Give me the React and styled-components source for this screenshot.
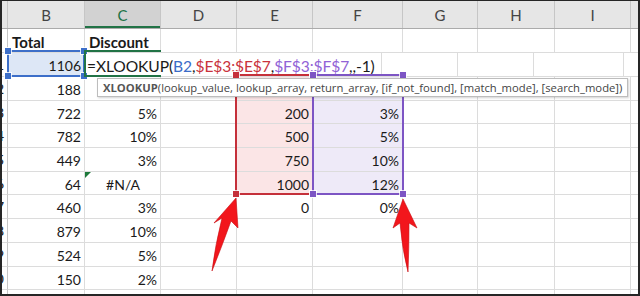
import React from "react";
import styled, { createGlobalStyle, css } from "styled-components";

const GlobalStyle = createGlobalStyle`
  body {
    margin: 0;
    background: #fff;
    font-family: "Lato", "Liberation Sans", sans-serif;
  }
`;

const COLUMNS = [
  { key: "B", width: 77 },
  { key: "C", width: 76 },
  { key: "D", width: 76 },
  { key: "E", width: 76 },
  { key: "F", width: 90 },
  { key: "G", width: 75 },
  { key: "H", width: 77 },
  { key: "I", width: 76 },
];

const FORMULA = [
  { text: "=XLOOKUP(", color: "#1a1a1a" },
  { text: "B2", color: "#3b6cc7" },
  { text: ",", color: "#1a1a1a" },
  { text: "$E$3:$E$7", color: "#c9323c" },
  { text: ",", color: "#1a1a1a" },
  { text: "$F$3:$F$7", color: "#9163d6" },
  { text: ",,-1)", color: "#1a1a1a" },
];

const ROWS = [
  { n: "", h: 24, bold: true, B: "Total", C: "Discount" },
  { n: "1", h: 24, B: "1106", formula: true },
  { n: "2", h: 24, B: "188", E: "", F: "" },
  { n: "3", h: 23, B: "722", C: "5%", E: "200", F: "3%" },
  { n: "4", h: 24, B: "782", C: "10%", E: "500", F: "5%" },
  { n: "5", h: 24, B: "449", C: "3%", E: "750", F: "10%" },
  { n: "6", h: 23, B: "64", C: "#N/A", E: "1000", F: "12%", error: true },
  { n: "7", h: 24, B: "460", C: "3%", E: "0", F: "0%" },
  { n: "8", h: 24, B: "879", C: "10%" },
  { n: "9", h: 24, B: "524", C: "5%" },
  { n: "10", h: 23, B: "150", C: "2%" },
  { n: "11", h: 24 },
];

const Frame = styled.div`
  width: 640px;
  height: 296px;
  box-sizing: border-box;
  border: 2px solid #262626;
  border-top-width: 1px;
  overflow: hidden;
  background: #fff;
`;

const Sheet = styled.div`
  position: relative;
  display: flex;
  flex-direction: column;
`;

const HeaderRow = styled.div`
  display: flex;
  height: 27px;
  background: #e6e6e6;
  border-bottom: 1px solid #ababab;
`;

const HeaderCell = styled.div`
  flex: 0 0 ${(p) => p.$w}px;
  box-sizing: border-box;
  display: flex;
  align-items: center;
  justify-content: center;
  border-right: 1px solid #c6c6c6;
  font-size: 15px;
  color: #444;

  ${(p) =>
    p.$active &&
    css`
      background: #d2d2d2;
      color: #217346;
      box-shadow: inset 0 -2px 0 #217346;
    `}
  ${(p) => p.$fill && "flex: 1 1 auto; border-right: none;"}
`;

const Row = styled.div`
  display: flex;
  height: ${(p) => p.$h}px;
  flex: 0 0 auto;
`;

const RowNumber = styled.div`
  flex: 0 0 6px;
  box-sizing: border-box;
  display: flex;
  align-items: center;
  justify-content: flex-end;
  padding-right: 3px;
  overflow: hidden;
  border-right: 1px solid #c6c6c6;
  border-bottom: 1px solid #dcdcdc;
  font-size: 14px;
  color: #222;
`;

const Cell = styled.div`
  position: relative;
  flex: 0 0 ${(p) => p.$w}px;
  box-sizing: border-box;
  display: flex;
  align-items: center;
  justify-content: ${(p) =>
    p.$align === "left" ? "flex-start" : p.$align === "center" ? "center" : "flex-end"};
  padding: 2px 3px 0 4px;
  border-right: 1px solid #dcdcdc;
  border-bottom: 1px solid #dcdcdc;
  background: ${(p) => p.$bg || "#fff"};
  font-size: ${(p) => (p.$bold ? 15 : 14)}px;
  font-weight: ${(p) => (p.$bold ? 700 : 400)};
  color: #1a1a1a;
  white-space: nowrap;
  overflow: ${(p) => (p.$overflow ? "visible" : "hidden")};

  ${(p) => p.$fill && "flex: 1 1 auto; border-right: none;"}

  ${(p) =>
    p.$error &&
    css`
      &::before {
        content: "";
        position: absolute;
        left: 0;
        top: 0;
        border-top: 6px solid #1e7a3c;
        border-right: 6px solid transparent;
      }
    `}
`;

const FormulaText = styled.span`
  position: relative;
  z-index: 1;
  background: #fff;
  padding: 1px 3px 1px 0;
  margin-left: -2px;
  font-size: 15.6px;
  letter-spacing: -0.1px;
`;

const RefBox = styled.div`
  position: absolute;
  z-index: 2;
  box-sizing: border-box;
  left: ${(p) => p.$x}px;
  top: ${(p) => p.$y}px;
  width: ${(p) => p.$w}px;
  height: ${(p) => p.$h}px;
  border: 2px solid ${(p) => p.$color};
  ${(p) => p.$open && "border-right: none;"}
`;

const Handle = styled.span`
  position: absolute;
  width: 6px;
  height: 6px;
  background: ${(p) => p.$color};
  box-shadow: 0 0 0 1px rgba(255, 255, 255, 0.8);
  ${(p) => (p.$v === "t" ? "top: -4px;" : "bottom: -4px;")}
  ${(p) => (p.$h === "l" ? "left: -4px;" : "right: -4px;")}
`;

const Tooltip = styled.div`
  position: absolute;
  z-index: 3;
  left: 95px;
  top: 77px;
  width: 531px;
  height: 19px;
  box-sizing: border-box;
  display: flex;
  align-items: center;
  padding-left: 5px;
  background: #fff;
  border: 1px solid #bdbdbd;
  box-shadow: 1px 1px 2px rgba(0, 0, 0, 0.18);
  font-family: "Open Sans", "Noto Sans", sans-serif;
  font-size: 11.25px;
  color: #444;
  white-space: nowrap;

  b {
    font-weight: 700;
    color: #555;
  }
`;

const Arrows = styled.svg`
  position: absolute;
  z-index: 4;
  left: 0;
  top: 0;
  pointer-events: none;
`;

function Box({ x, y, w, h, color, open, corners = ["tl", "tr", "bl", "br"] }) {
  return (
    <RefBox $x={x} $y={y} $w={w} $h={h} $color={color} $open={open}>
      {corners.map((c) => (
        <Handle key={c} $v={c[0]} $h={c[1]} $color={color} />
      ))}
    </RefBox>
  );
}

function cellProps(row, col) {
  const value = row[col.key];
  const props = { $w: col.width, $bold: row.bold };
  if (row.bold) props.$align = "left";
  if (col.key === "C" && value === "#N/A") props.$align = "center";
  if (row.error && col.key === "C") props.$error = true;
  const idx = ROWS.indexOf(row);
  if (idx >= 2 && idx <= 6) {
    if (col.key === "E") props.$bg = "#fbe5e6";
    if (col.key === "F") props.$bg = "#eeeaf8";
  }
  if (idx === 1 && col.key === "B") props.$bg = "#dde7f6";
  return props;
}

export default function App() {
  return (
    <>
      <GlobalStyle />
      <Frame>
        <Sheet>
          <HeaderRow>
            <HeaderCell $w={6} />
            {COLUMNS.map((c) => (
              <HeaderCell key={c.key} $w={c.width} $active={c.key === "C"}>
                {c.key}
              </HeaderCell>
            ))}
            <HeaderCell $fill />
          </HeaderRow>

          {ROWS.map((row, i) => (
            <Row key={i} $h={row.h}>
              <RowNumber>{row.n}</RowNumber>
              {COLUMNS.map((col) =>
                row.formula && col.key === "C" ? (
                  <Cell key={col.key} $w={col.width} $align="left" $overflow>
                    <FormulaText>
                      {FORMULA.map((part, k) => (
                        <span key={k} style={{ color: part.color }}>
                          {part.text}
                        </span>
                      ))}
                    </FormulaText>
                  </Cell>
                ) : (
                  <Cell key={col.key} {...cellProps(row, col)}>
                    {row[col.key]}
                  </Cell>
                )
              )}
              <Cell $fill />
            </Row>
          ))}

          <Box x={5} y={49} w={78} h={27} color="#3d6fc9" />
          <Box x={82} y={49} w={77} h={27} color="#217346" open corners={[]} />
          <Box x={233} y={73} w={79} h={121} color="#c5303a" />
          <Box x={310} y={73} w={92} h={121} color="#7d55c4" />

          <Tooltip>
            <b>XLOOKUP</b>(lookup_value, lookup_array, return_array, [if_not_found],
            [match_mode], [search_mode])
          </Tooltip>

          <Arrows width="636" height="293" viewBox="2 1 636 293">
            <path
              d="M236 198 L238 228 L231 221 Q222 246 212 271 Q215 246 222 218 L214 223 Z"
              fill="#f2161c"
              stroke="#c80d12"
              strokeWidth="0.6"
            />
            <path
              d="M403 199 L417 228 L409 223 Q409 249 408 272 Q402 249 400 223 L393 228 Z"
              fill="#f2161c"
              stroke="#c80d12"
              strokeWidth="0.6"
            />
          </Arrows>
        </Sheet>
      </Frame>
    </>
  );
}
